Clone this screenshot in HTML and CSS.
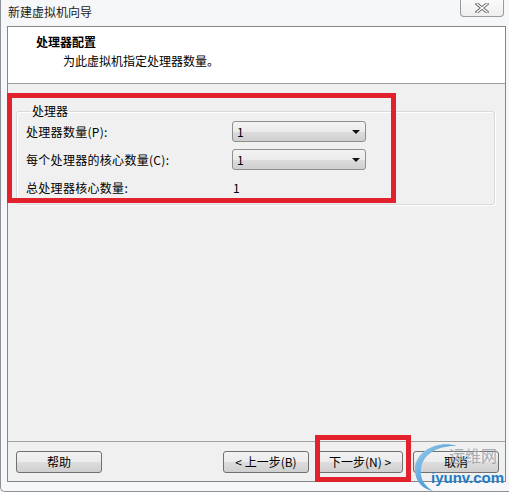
FILE: index.html
```html
<!DOCTYPE html>
<html lang="zh-CN">
<head>
<meta charset="utf-8">
<title>新建虚拟机向导</title>
<link rel="stylesheet" href="styles.css">
</head>
<body>
<div class="window">
  <div class="titlebar">
    <span class="title">新建虚拟机向导</span>
    <button class="close" type="button" aria-label="关闭">
      <svg width="14" height="10" viewBox="0 0 14 10">
        <path d="M2 1 L12 9 M12 1 L2 9" stroke="#6e6e6e" stroke-width="3.2" stroke-linecap="square" fill="none"/>
        <path d="M2 1 L12 9 M12 1 L2 9" stroke="#fdfdfd" stroke-width="1.3" stroke-linecap="square" fill="none"/>
      </svg>
    </button>
  </div>
  <div class="client">
    <div class="header">
      <div class="h-title">处理器配置</div>
      <div class="h-sub">为此虚拟机指定处理器数量。</div>
    </div>
    <div class="content">
      <fieldset class="group">
        <legend>处理器</legend>
        <div class="grid">
          <label class="lbl">处理器数量(P):</label>
          <div class="combo"><span>1</span><i class="arrow"></i></div>
          <label class="lbl">每个处理器的核心数量(C):</label>
          <div class="combo"><span>1</span><i class="arrow"></i></div>
          <span class="lbl">总处理器核心数量:</span>
          <span class="val">1</span>
        </div>
      </fieldset>
    </div>
    <div class="footer">
      <button class="btn" type="button">帮助</button>
      <span class="spacer"></span>
      <button class="btn" type="button">&lt; 上一步(B)</button>
      <button class="btn next" type="button">下一步(N) &gt;</button>
      <button class="btn cancel" type="button">取消</button>
    </div>
  </div>

  <div class="mark mark-group"></div>
  <div class="mark mark-next"></div>

  <div class="watermark">
    <svg class="wm-arc" width="60" height="50" viewBox="0 0 60 50">
      <defs>
        <linearGradient id="g" x1="0" y1="0" x2="1" y2="1">
          <stop offset="0" stop-color="#9fd0ee"/>
          <stop offset="1" stop-color="#1678c2"/>
        </linearGradient>
      </defs>
      <path d="M48 4 C30 -2 6 8 6 28 C6 40 14 47 24 49 C15 44 11 36 12 27 C13 12 30 3 48 4 Z" fill="url(#g)"/>
    </svg>
    <span class="wm-cn">运维网</span>
    <span class="wm-en">iyunv.com</span>
  </div>
</div>
</body>
</html>
```
FILE: styles.css
```css
* { box-sizing: border-box; }
html, body {
  margin: 0;
  padding: 0;
  width: 509px;
  height: 492px;
  overflow: hidden;
  background: #f4f5f6;
  font-family: "Noto Sans CJK SC", "Noto Sans", sans-serif;
  font-size: 12px;
  color: #000;
}
.window {
  position: relative;
  width: 509px;
  height: 492px;
  display: flex;
  flex-direction: column;
  background: #f6f7f8;
  border-left: 1px solid #8d9196;
  border-bottom: 1px solid #8d9196;
  border-bottom-left-radius: 5px;
}
.titlebar {
  height: 26px;
  display: flex;
  align-items: flex-start;
  padding-left: 7px;
}
.title {
  line-height: 16px;
  margin-top: 4px;
  color: #1a1a1a;
}
.close {
  margin-left: auto;
  margin-right: 5px;
  margin-top: -1px;
  width: 44px;
  height: 18px;
  border: 1px solid #9a9a9a;
  border-top: none;
  border-radius: 0 0 4px 4px;
  background: linear-gradient(#fbfbfb, #eeeeee);
  display: flex;
  align-items: center;
  justify-content: center;
  padding: 0;
}
.client {
  margin: 0 3px 0 6px;
  height: 456px;
  border: 1px solid #858585;
  display: flex;
  flex-direction: column;
  background: #f0f0f0;
}
.header {
  height: 57px;
  background: #fff;
  border-bottom: 1px solid #a0a0a0;
  padding: 7px 0 0 28px;
}
.h-title {
  font-weight: bold;
  line-height: 16px;
}
.h-sub {
  line-height: 16px;
  margin-top: 3px;
  padding-left: 27px;
}
.content {
  flex: 1;
  padding: 19px 10px 0 8px;
}
.group {
  margin: 0;
  padding: 2px 9px 6px 9px;
  border: 1px solid #d9d9d9;
  border-radius: 3px;
  box-shadow: inset 1px 1px 0 #fff, 1px 1px 0 #fff;
}
.group legend {
  padding: 0 1px;
  margin-left: 5px;
  line-height: 16px;
}
.grid {
  display: grid;
  grid-template-columns: 206px 134px;
  grid-auto-rows: 21px;
  row-gap: 7px;
  align-items: center;
}
.lbl { line-height: 16px; letter-spacing: 0.3px; }
.val { padding-left: 1px; line-height: 16px; }
.combo {
  height: 21px;
  border: 1px solid #8e8f8f;
  border-radius: 3px;
  background: linear-gradient(#f3f3f3 0%, #ebebeb 50%, #dddddd 51%, #cfcfcf 100%);
  display: flex;
  align-items: center;
  padding-left: 4px;
  padding-right: 5px;
  line-height: 16px;
}
.combo span { flex: 1; }
.arrow {
  width: 0;
  height: 0;
  border-left: 4px solid transparent;
  border-right: 4px solid transparent;
  border-top: 4px solid #111;
}
.footer {
  height: 40px;
  border-top: 1px solid #a0a0a0;
  display: flex;
  align-items: flex-start;
  padding: 9px 6px 0 8px;
}
.spacer { flex: 1; }
.btn {
  width: 86px;
  height: 22px;
  border: 1px solid #707070;
  border-radius: 3px;
  background: linear-gradient(#f2f2f2 0%, #ebebeb 50%, #dddddd 51%, #cfcfcf 100%);
  font-family: inherit;
  font-size: 12px;
  color: #000;
  line-height: 16px;
  padding: 0;
}
.next { margin-left: 8px; }
.cancel { margin-left: 10px; }

.mark {
  position: absolute;
  border: 5px solid #e1212b;
}
.mark-group { left: 6px; top: 93px; width: 389px; height: 110px; }
.mark-next { left: 314px; top: 435px; width: 96px; height: 47px; }

.watermark {
  position: absolute;
  left: 408px;
  top: 441px;
  width: 101px;
  height: 51px;
}
.wm-arc { position: absolute; left: 0; top: 1px; }
.wm-cn {
  position: absolute;
  left: 40px;
  top: 4px;
  font-size: 16px;
  line-height: 20px;
  color: #9aa3ab;
  opacity: 0.85;
}
.wm-en {
  position: absolute;
  left: 22px;
  top: 28px;
  font-family: "Liberation Sans", Arial, sans-serif;
  font-weight: bold;
  font-size: 15px;
  line-height: 18px;
  color: #1c7cc4;
}
```
